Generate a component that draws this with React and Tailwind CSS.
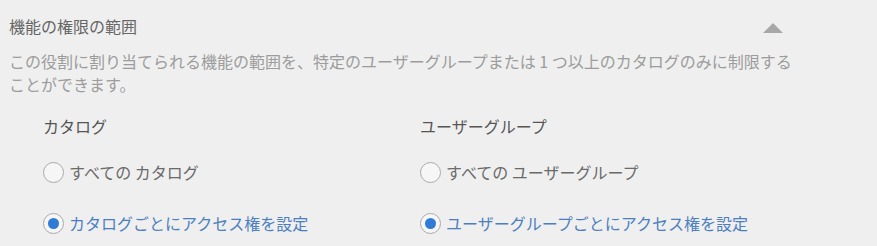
import React from "react";

function Radio({ checked, label }) {
  return (
    <div className="flex items-center h-[22px]">
      <span
        className={
          "flex items-center justify-center w-[21px] h-[21px] rounded-full border-[1.5px] border-[#a9a9a9] bg-[#f6f6f6] shrink-0"
        }
      >
        {checked && <span className="w-[11px] h-[11px] rounded-full bg-[#2f7bd6]" />}
      </span>
      <span
        className={
          "ml-[5px] text-[16px] leading-[22px] " +
          (checked ? "text-[#4d7fc0]" : "text-[#6a6a6a]")
        }
      >
        {label}
      </span>
    </div>
  );
}

export default function App() {
  return (
    <div
      className="w-[877px] h-[246px] bg-[#efefef] pl-[9px] pt-[15px] overflow-hidden"
      style={{ fontFamily: '"Noto Sans CJK JP", "Noto Sans", sans-serif' }}
    >
      <div className="flex items-center justify-between w-[774px] h-[22px]">
        <div className="text-[16px] leading-[22px] text-[#666666]">機能の権限の範囲</div>
        <svg width="20" height="10" viewBox="0 0 20 10" className="mt-[3px]">
          <polygon points="10,0 20,10 0,10" fill="#a8a8a8" />
        </svg>
      </div>
      <div className="mt-[13px] text-[16px] leading-[23px] text-[#9c9c9c] whitespace-nowrap">
        <div>この役割に割り当てられる機能の範囲を、特定のユーザーグループまたは 1 つ以上のカタログのみに制限する</div>
        <div>ことができます。</div>
      </div>
      <div className="mt-[19px] grid grid-cols-[377px_1fr] pl-[34px]">
        <div className="flex flex-col">
          <div className="text-[16px] leading-[22px] text-[#555555]">カタログ</div>
          <div className="mt-[24px]">
            <Radio checked={false} label="すべての カタログ" />
          </div>
          <div className="mt-[29px]">
            <Radio checked={true} label="カタログごとにアクセス権を設定" />
          </div>
        </div>
        <div className="flex flex-col">
          <div className="text-[16px] leading-[22px] text-[#555555]">ユーザーグループ</div>
          <div className="mt-[24px]">
            <Radio checked={false} label="すべての ユーザーグループ" />
          </div>
          <div className="mt-[29px]">
            <Radio checked={true} label="ユーザーグループごとにアクセス権を設定" />
          </div>
        </div>
      </div>
    </div>
  );
}
